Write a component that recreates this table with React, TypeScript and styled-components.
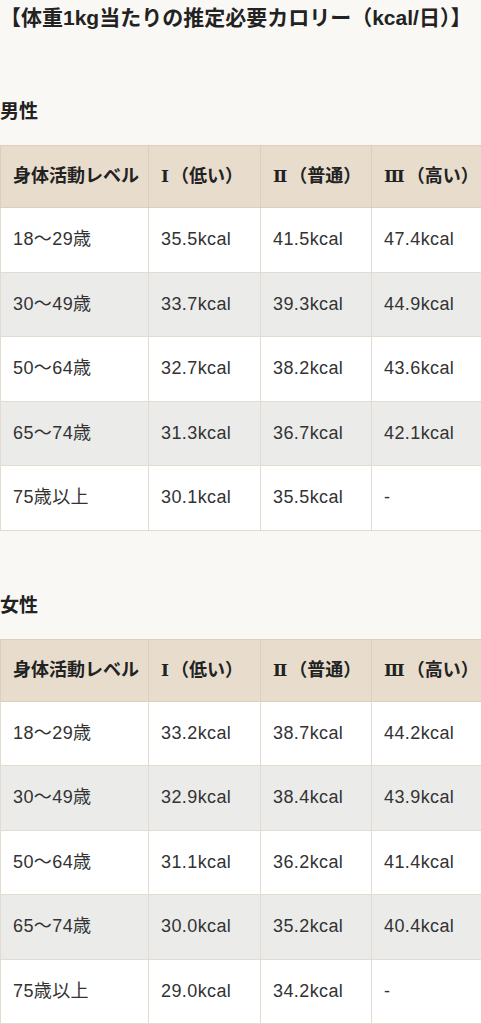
import React from 'react';
import styled, { createGlobalStyle } from 'styled-components';

const GlobalStyle = createGlobalStyle`
  html, body {
    margin: 0;
    padding: 0;
    background: #faf8f4;
    overflow-x: hidden;
  }
  body {
    font-family: "Liberation Sans", Arial, "Noto Sans CJK JP", sans-serif;
    color: #333;
  }
`;

const Page = styled.div`
  width: 481px;
  padding-top: 3px;
`;

const Title = styled.h2`
  margin: 0;
  font-size: 21px;
  line-height: 30px;
  font-weight: 700;
  color: #222;
  white-space: nowrap;
`;

const Section = styled.section`
  margin-top: 64px;

  & + & {
    margin-top: 60px;
  }
`;

const Heading = styled.h3`
  margin: 0 0 18px;
  font-size: 19px;
  line-height: 30px;
  font-weight: 700;
  color: #222;
`;

const Table = styled.table`
  border-collapse: collapse;
  table-layout: fixed;
  width: 483px;
  font-size: 18px;
`;

const HeadCell = styled.th`
  background: #e8ddcd;
  border: 1px solid #dccfbd;
  padding: 17px 0 17px 12px;
  text-align: left;
  font-weight: 700;
  line-height: 27px;
  color: #222;
  white-space: nowrap;
`;

const Numeral = styled.span`
  font-family: "DejaVu Serif", "Liberation Serif", serif;
  font-size: 17px;
  margin-right: 2px;
`;

const Row = styled.tr<{ $striped: boolean }>`
  background: ${p => (p.$striped ? '#ebebea' : '#ffffff')};
`;

const Cell = styled.td`
  border: 1px solid #e3dbd0;
  padding: 18px 0 18px 12px;
  line-height: 27.5px;
  letter-spacing: 0.4px;
  color: #333;
  white-space: nowrap;
`;

type Data = { age: string; values: string[] };

const male: Data[] = [
  { age: '18～29歳', values: ['35.5kcal', '41.5kcal', '47.4kcal'] },
  { age: '30～49歳', values: ['33.7kcal', '39.3kcal', '44.9kcal'] },
  { age: '50～64歳', values: ['32.7kcal', '38.2kcal', '43.6kcal'] },
  { age: '65～74歳', values: ['31.3kcal', '36.7kcal', '42.1kcal'] },
  { age: '75歳以上', values: ['30.1kcal', '35.5kcal', '-'] },
];

const female: Data[] = [
  { age: '18～29歳', values: ['33.2kcal', '38.7kcal', '44.2kcal'] },
  { age: '30～49歳', values: ['32.9kcal', '38.4kcal', '43.9kcal'] },
  { age: '50～64歳', values: ['31.1kcal', '36.2kcal', '41.4kcal'] },
  { age: '65～74歳', values: ['30.0kcal', '35.2kcal', '40.4kcal'] },
  { age: '75歳以上', values: ['29.0kcal', '34.2kcal', '-'] },
];

const levels = [
  { num: 'Ⅰ', label: '（低い）' },
  { num: 'Ⅱ', label: '（普通）' },
  { num: 'Ⅲ', label: '（高い）' },
];

const CalorieTable = ({ rows }: { rows: Data[] }) => (
  <Table>
    <colgroup>
      <col style={{ width: 148 }} />
      <col style={{ width: 112 }} />
      <col style={{ width: 111 }} />
      <col style={{ width: 112 }} />
    </colgroup>
    <thead>
      <tr>
        <HeadCell>身体活動レベル</HeadCell>
        {levels.map(l => (
          <HeadCell key={l.num}>
            <Numeral>{l.num}</Numeral>
            {l.label}
          </HeadCell>
        ))}
      </tr>
    </thead>
    <tbody>
      {rows.map((r, i) => (
        <Row key={r.age} $striped={i % 2 === 1}>
          <Cell>{r.age}</Cell>
          {r.values.map((v, j) => (
            <Cell key={j}>{v}</Cell>
          ))}
        </Row>
      ))}
    </tbody>
  </Table>
);

export default function App() {
  return (
    <Page>
      <GlobalStyle />
      <Title>【体重1kg当たりの推定必要カロリー（kcal/日）】</Title>
      <Section>
        <Heading>男性</Heading>
        <CalorieTable rows={male} />
      </Section>
      <Section>
        <Heading>女性</Heading>
        <CalorieTable rows={female} />
      </Section>
    </Page>
  );
}
